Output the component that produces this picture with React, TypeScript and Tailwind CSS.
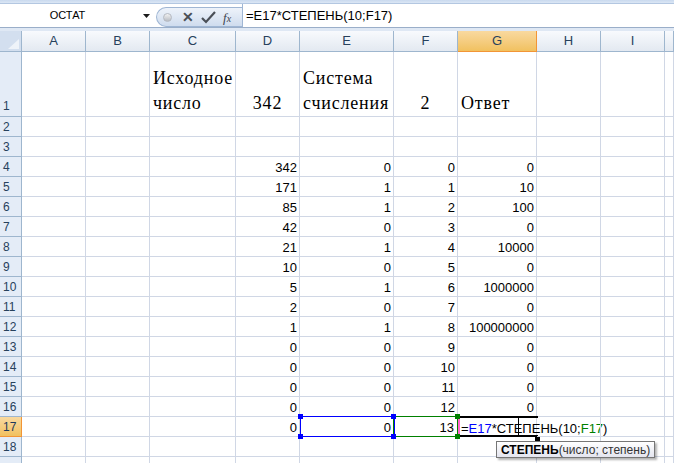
import React from "react";

const COLS = ["A", "B", "C", "D", "E", "F", "G", "H", "I", ""];
const W = [
    "w-[64px]",
    "w-[64px]",
    "w-[86px]",
    "w-[64px]",
    "w-[94px]",
    "w-[64px]",
    "w-[79px]",
    "w-[64px]",
    "w-[64px]",
    "flex-1",
];

// D, E, F, G for rows 4..16
const DATA: (string | number)[][] = [
    [342, 0, 0, 0],
    [171, 1, 1, 10],
    [85, 1, 2, 100],
    [42, 0, 3, 0],
    [21, 1, 4, 10000],
    [10, 0, 5, 0],
    [5, 1, 6, 1000000],
    [2, 0, 7, 0],
    [1, 1, 8, 100000000],
    [0, 0, 9, 0],
    [0, 0, 10, 0],
    [0, 0, 11, 0],
    [0, 0, 12, 0],
];

const sans = "font-['Liberation_Sans',Arial,sans-serif]";
const serif = "font-['Liberation_Serif','Times_New_Roman',serif] text-[18px] leading-[25px] tracking-[0.8px]";

function RowHead({n, active, tall}: {n?: number; active?: boolean; tall?: boolean}) {
    return (
        <div
            className={
                "w-[22px] shrink-0 border-r border-b flex items-end pl-[3px] text-[12px] leading-none " +
                (active
                    ? "bg-gradient-to-b from-[#f9d99f] to-[#f1c15f] border-[#f29536] text-[#1e395b]"
                    : "bg-[#e4ecf7] border-[#9eb6ce] text-[#27415c]") +
                (tall ? " pb-[4px]" : " pb-[3px]")
            }
        >
            {n}
        </div>
    );
}

function Cell({i, children, className = ""}: {i: number; children?: React.ReactNode; className?: string}) {
    return (
        <div className={W[i] + " shrink-0 border-r border-b border-[#d0d7e5] relative " + className}>
            {children}
        </div>
    );
}

function Num({i, v}: {i: number; v?: string | number}) {
    return (
        <Cell i={i} className="flex items-end justify-end pr-[2px] pb-[2px] text-[13px] leading-none">
            {v}
        </Cell>
    );
}

function Handle({className}: {className: string}) {
    return <div className={"absolute w-[5px] h-[5px] z-20 " + className} />;
}

export default function App() {
    return (
        <div className={"w-[674px] h-[463px] overflow-hidden bg-white text-black " + sans}>
            {/* ribbon edge */}
            <div className="h-[4px] bg-gradient-to-b from-[#c9d9ee] to-[#dce7f5] border-b border-[#b3c7e1]" />

            {/* formula bar */}
            <div className="h-[23px] flex items-end bg-white">
                <div className="w-[156px] h-full flex items-center">
                    <div className="flex-1 text-center text-[11px] pr-[8px]">ОСТАТ</div>
                    <svg width="7" height="4" viewBox="0 0 7 4" className="mr-[6px]">
                        <path d="M0 0h7L3.5 4z" fill="#1b1b1b" />
                    </svg>
                </div>
                <div className="w-[86px] h-[20px] rounded-l-[10px] border border-r-0 border-[#9fb6d4] bg-gradient-to-b from-[#eef3fa] to-[#cfdcee] flex items-center">
                    <div className="ml-[6px] w-[9px] h-[9px] rounded-full bg-gradient-to-b from-[#f2f2f2] to-[#b8bcc3] border border-[#b4b9c1]" />
                    <span className="ml-[10px] text-[#4a4f57] text-[14px] leading-none font-bold">✕</span>
                    <svg width="15" height="13" viewBox="0 0 15 13" className="ml-[7px]">
                        <path d="M1 7l4 4 9-10" stroke="#4a4f57" strokeWidth="2.2" fill="none" />
                    </svg>
                    <span className="ml-[7px] text-[13px] italic font-['Liberation_Serif',serif] text-[#3d4450] leading-none">
                        f<span className="text-[10px]">x</span>
                    </span>
                </div>
                <div className="flex-1 h-full border-l border-[#9fb6d4] flex items-center pl-[3px] text-[13px]">
                    =E17*СТЕПЕНЬ(10;F17)
                </div>
            </div>
            <div className="h-[4px] border-t border-[#9aaec9] bg-[#dfe8f4]" />

            {/* column headers */}
            <div className="h-[21px] flex text-[13px] text-[#27415c]">
                <div className="w-[22px] shrink-0 border-r border-b border-[#9eb6ce] bg-[#d3dfef] relative">
                    <svg width="22" height="21" viewBox="0 0 22 21" className="absolute inset-0">
                        <path d="M19 8v10H8z" fill="#eef3f9" />
                    </svg>
                </div>
                {COLS.map((c, i) => (
                    <div
                        key={i}
                        className={
                            W[i] +
                            " shrink-0 border-r border-b flex items-center justify-center " +
                            (c === "G"
                                ? "bg-gradient-to-b from-[#f9d99f] to-[#f1c15f] border-[#f29536]"
                                : "bg-gradient-to-b from-[#f8fafd] to-[#e3e9f1] border-[#9eb6ce]")
                        }
                    >
                        {c}
                    </div>
                ))}
            </div>

            {/* row 1 */}
            <div className="h-[65px] flex">
                <RowHead n={1} tall />
                <Cell i={0} />
                <Cell i={1} />
                <Cell i={2} className={"flex items-end pl-[3px] " + serif}>
                    <div>Исходное<br />число</div>
                </Cell>
                <Cell i={3} className={"flex items-end justify-center " + serif}>
                    342
                </Cell>
                <Cell i={4} className={"flex items-end pl-[3px] " + serif}>
                    <div>Система<br />счисления</div>
                </Cell>
                <Cell i={5} className={"flex items-end justify-center " + serif}>
                    2
                </Cell>
                <Cell i={6} className={"flex items-end pl-[3px] " + serif}>
                    Ответ
                </Cell>
                <Cell i={7} />
                <Cell i={8} />
                <Cell i={9} />
            </div>

            {[2, 3].map((r) => (
                <div key={r} className="h-[20px] flex">
                    <RowHead n={r} />
                    {W.map((_, i) => (
                        <Cell key={i} i={i} />
                    ))}
                </div>
            ))}

            {DATA.map((d, k) => (
                <div key={k} className="h-[20px] flex">
                    <RowHead n={k + 4} />
                    <Cell i={0} />
                    <Cell i={1} />
                    <Cell i={2} />
                    <Num i={3} v={d[0]} />
                    <Num i={4} v={d[1]} />
                    <Num i={5} v={d[2]} />
                    <Num i={6} v={d[3]} />
                    <Cell i={7} />
                    <Cell i={8} />
                    <Cell i={9} />
                </div>
            ))}

            {/* row 17 — editing */}
            <div className="h-[20px] flex relative z-10">
                <RowHead n={17} active />
                <Cell i={0} />
                <Cell i={1} />
                <Cell i={2} />
                <Num i={3} v={0} />
                <Cell i={4} className="flex items-end justify-end pr-[2px] pb-[2px] text-[13px] leading-none">
                    0
                    <div className="absolute left-0 -top-px w-[95px] h-[21px] border border-[#0000ff]" />
                    <Handle className="bg-[#0000ff] -left-[2px] -top-[3px]" />
                    <Handle className="bg-[#0000ff] -left-[2px] -bottom-[3px]" />
                    <Handle className="bg-[#0000ff] -right-[3px] -top-[3px]" />
                    <Handle className="bg-[#0000ff] -right-[3px] -bottom-[3px]" />
                </Cell>
                <Cell i={5} className="flex items-end justify-end pr-[3px] pb-[2px] text-[13px] leading-none">
                    13
                    <div className="absolute -left-px -top-px w-[65px] h-[21px] border border-[#008000]" />
                    <Handle className="bg-[#008000] -right-[3px] -top-[3px]" />
                    <Handle className="bg-[#008000] -right-[3px] -bottom-[3px]" />
                </Cell>
                <Cell i={6} className="!border-b-0">
                    <div className="absolute left-0 -top-px w-[80px] h-[21px] border-t-2 border-b-2 border-black" />
                    <div className="absolute left-0 top-0 w-[2px] h-[19px] bg-[#ff66cc]" />
                    <div className="absolute left-[60px] top-0 w-px h-[19px] bg-black" />
                    <div className="absolute -right-[4px] -bottom-[4px] w-[5px] h-[5px] bg-black" />
                    <div className="absolute left-[3px] bottom-[2px] whitespace-nowrap text-[13px] leading-none">
                        =<span className="text-[#0000ff]">E17</span>*СТЕПЕНЬ(10;<span className="text-[#008000]">F17</span>)
                    </div>
                    <div className="absolute left-[38px] top-[24px] h-[17px] px-[4px] flex items-center whitespace-nowrap border border-[#767676] bg-gradient-to-b from-white to-[#e4e5ef] text-[12px] leading-none text-[#333] shadow-[2px_2px_2px_rgba(0,0,0,0.3)] z-30">
                        <b className="text-black">СТЕПЕНЬ</b>(число; степень)
                    </div>
                </Cell>
                <Cell i={7} />
                <Cell i={8} />
                <Cell i={9} />
            </div>

            <div className="h-[20px] flex">
                <RowHead n={18} />
                {W.map((_, i) => (
                    <Cell key={i} i={i} />
                ))}
            </div>
            <div className="h-[20px] flex">
                <RowHead />
                {W.map((_, i) => (
                    <Cell key={i} i={i} />
                ))}
            </div>
        </div>
    );
}
